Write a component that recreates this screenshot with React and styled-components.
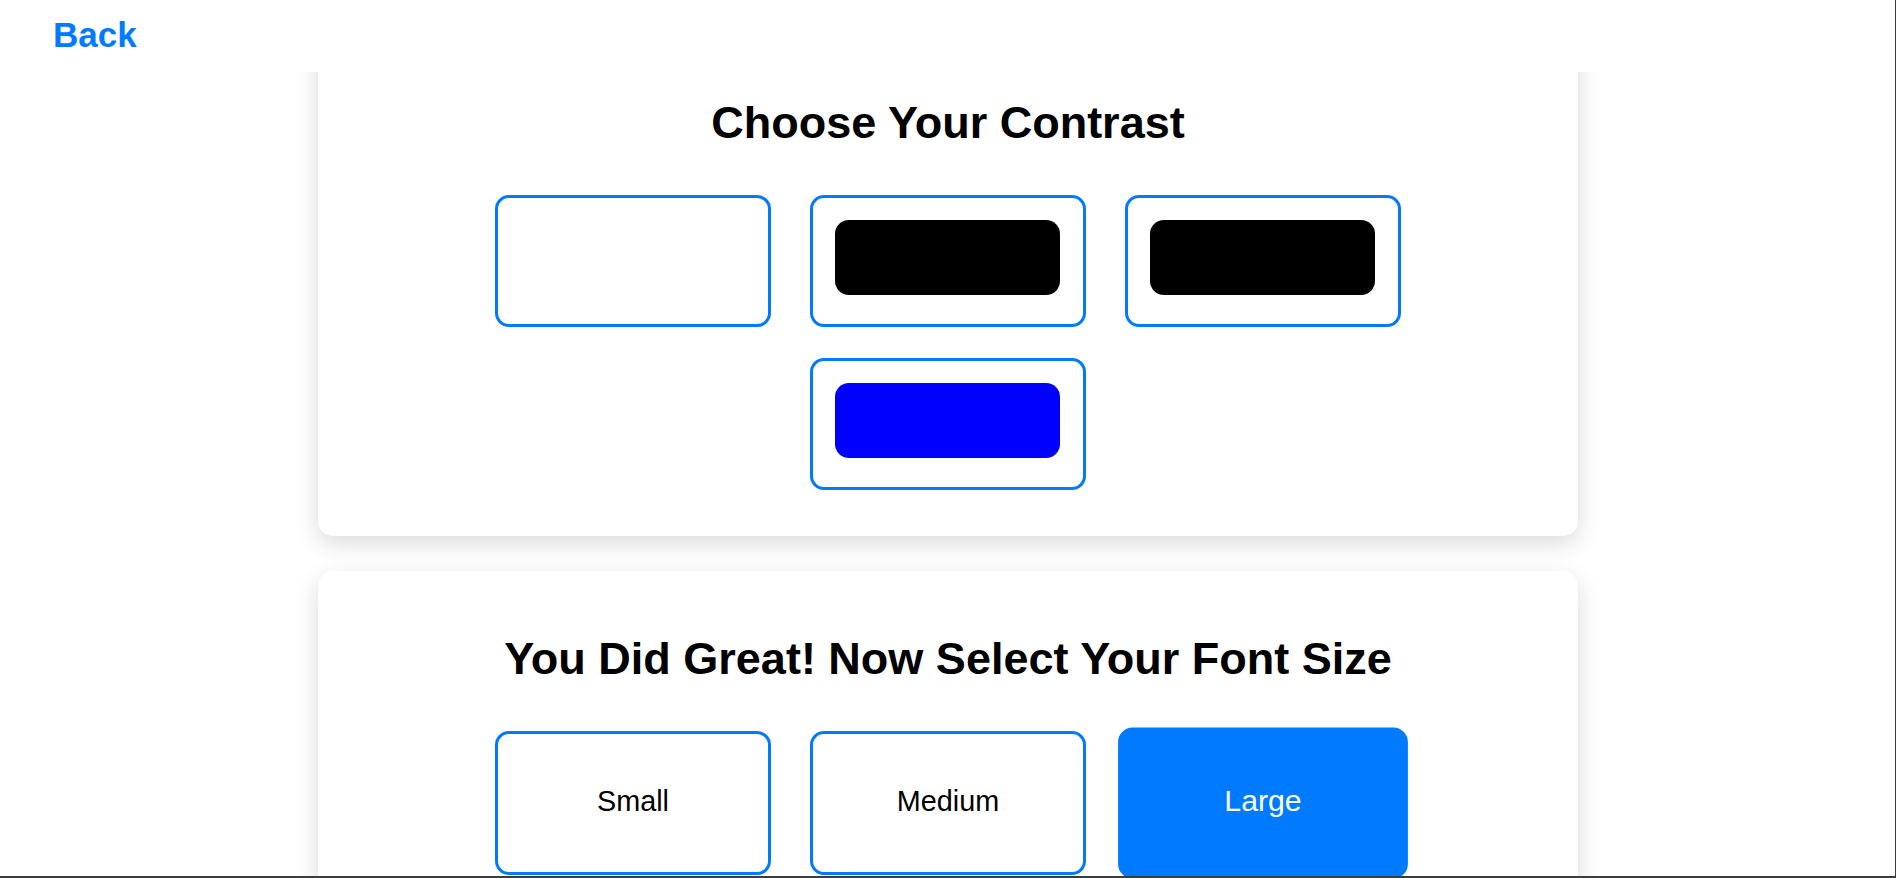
import React, { useState } from 'react';
import styled, { createGlobalStyle } from 'styled-components';

const GlobalStyle = createGlobalStyle`
  * {
    box-sizing: border-box;
  }

  body {
    margin: 0;
    background: #fff;
    font-family: "Liberation Sans", Arial, sans-serif;
  }

  body::after {
    content: '';
    position: fixed;
    inset: 0;
    border-right: 1px solid #3c3c3c;
    border-bottom: 2px solid #3c3c3c;
    pointer-events: none;
    z-index: 20;
  }
`;

const Header = styled.header`
  position: fixed;
  top: 0;
  left: 0;
  right: 0;
  height: 72px;
  display: flex;
  align-items: flex-start;
  padding: 15px 0 0 53px;
  background: #fff;
  z-index: 10;
`;

const BackButton = styled.button`
  padding: 0;
  background: none;
  border: none;
  color: #007bff;
  font-family: "Liberation Sans", Arial, sans-serif;
  font-size: 35px;
  font-weight: bold;
  cursor: pointer;
`;

const Page = styled.main`
  display: flex;
  flex-direction: column;
  align-items: center;
  gap: 35px;
  padding: 35px 0 40px;
`;

const Card = styled.section`
  width: 1260px;
  padding: 62px 40px 46px;
  background: #fff;
  border-radius: 15px;
  box-shadow: 0 8px 24px rgba(0, 0, 0, 0.14);
`;

const Title = styled.h2`
  margin: 0 0 46px;
  text-align: center;
  color: #000;
  font-size: 45px;
  font-weight: bold;
`;

const Options = styled.div`
  display: flex;
  flex-wrap: wrap;
  justify-content: center;
  gap: 31px 39px;
  max-width: 910px;
  margin: 0 auto;
`;

const ContrastOption = styled.button`
  width: 276px;
  height: 132px;
  padding: 22px 23px 29px 22px;
  background: #fff;
  border: 3px solid #007bff;
  border-radius: 14px;
  cursor: pointer;
`;

const Swatch = styled.div`
  width: 100%;
  height: 75px;
  border-radius: 14px;
  background: ${(p) => p.$color};
`;

const SizeOption = styled.button`
  width: 276px;
  height: 144px;
  padding: 0 0 4px;
  border: 3px solid #007bff;
  border-radius: 14px;
  background: ${(p) => (p.$active ? '#007bff' : '#fff')};
  color: ${(p) => (p.$active ? '#fff' : '#000')};
  font-family: "Liberation Sans", Arial, sans-serif;
  font-size: 28.8px;
  transform: ${(p) => (p.$active ? 'scale(1.05)' : 'none')};
  cursor: pointer;
`;

const contrasts = ['#fff', '#000', '#000', '#0000ff'];
const sizes = ['Small', 'Medium', 'Large'];

const App = () => {
  const [size, setSize] = useState('Large');

  return (
    <>
      <GlobalStyle />
      <Header>
        <BackButton type="button">Back</BackButton>
      </Header>
      <Page>
        <Card>
          <Title>Choose Your Contrast</Title>
          <Options>
            {contrasts.map((color, i) => (
              <ContrastOption key={i} type="button">
                <Swatch $color={color} />
              </ContrastOption>
            ))}
          </Options>
        </Card>

        <Card>
          <Title>You Did Great! Now Select Your Font Size</Title>
          <Options>
            {sizes.map((s) => (
              <SizeOption
                key={s}
                type="button"
                $active={size === s}
                onClick={() => setSize(s)}
              >
                {s}
              </SizeOption>
            ))}
          </Options>
        </Card>
      </Page>
    </>
  );
};

export default App;
